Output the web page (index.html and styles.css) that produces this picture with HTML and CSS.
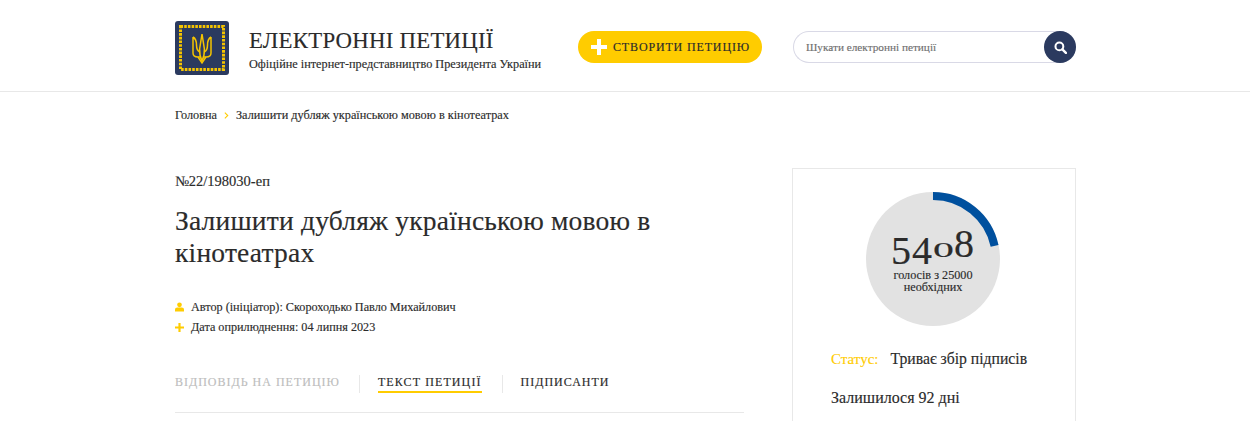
FILE: index.html
```html
<!DOCTYPE html>
<html lang="uk">
<head>
<meta charset="utf-8">
<title>Електронні петиції</title>
<link rel="stylesheet" href="styles.css">
</head>
<body>
<header class="site-header">
  <div class="header-inner">
    <a class="logo" href="#">
      <svg class="logo-mark" viewBox="0 0 54 54" width="54" height="54" aria-hidden="true">
        <rect width="54" height="54" rx="3" fill="#2b3a5f"/>
        <rect x="5.500" y="5.500" width="43" height="43" fill="none" stroke="#f5c400" stroke-width="3" stroke-dasharray="2.600 1.100"/>
        <g fill="none" stroke="#f5c400" stroke-width="1.500">
          <path d="M27 13 L24.600 28 Q24.400 35 27 40 Q29.600 35 29.400 28 Z"/>
          <path d="M18 16 V32 Q18 36 23 36 L25 36 M18 16 Q21.500 18 21.500 24 Q21.500 29 24.500 31"/>
          <path d="M36 16 V32 Q36 36 31 36 L29 36 M36 16 Q32.500 18 32.500 24 Q32.500 29 29.500 31"/>
          <path d="M23 36 L27 42 L31 36"/>
        </g>
      </svg>
      <span class="logo-text">
        <span class="logo-title">ЕЛЕКТРОННІ ПЕТИЦІЇ</span>
        <span class="logo-sub">Офіційне інтернет-представництво Президента України</span>
      </span>
    </a>
    <a class="create-btn" href="#">
      <svg viewBox="0 0 16 16" width="16" height="16" aria-hidden="true"><path d="M6 0h4v6h6v4h-6v6H6v-6H0V6h6z" fill="#fff"/></svg>
      <span>СТВОРИТИ ПЕТИЦІЮ</span>
    </a>
    <form class="search">
      <span class="search-text">Шукати електронні петиції</span>
      <span class="search-btn">
        <svg viewBox="0 0 14 14" width="13" height="13" aria-hidden="true"><circle cx="5.800" cy="5.800" r="4.200" fill="none" stroke="#fff" stroke-width="2.200"/><path d="M9 9l3.800 3.800" stroke="#fff" stroke-width="2.600" stroke-linecap="round"/></svg>
      </span>
    </form>
  </div>
</header>

<main class="page">
  <nav class="crumbs">
    <a href="#">Головна</a>
    <svg class="crumb-sep" viewBox="0 0 6 8" width="5" height="7" aria-hidden="true"><path d="M1 .5 4.500 4 1 7.500" fill="none" stroke="#ffcc00" stroke-width="1.300"/></svg>
    <span>Залишити дубляж українською мовою в кінотеатрах</span>
  </nav>

  <div class="columns">
    <article class="petition">
      <div class="number">№22/198030-еп</div>
      <h1>Залишити дубляж українською мовою в кінотеатрах</h1>
      <ul class="meta">
        <li>
          <svg viewBox="0 0 10 10" width="9" height="10" aria-hidden="true"><circle cx="5" cy="2.600" r="2.600" fill="#ffcc00"/><path d="M0 10V7.500Q0 5.500 2.500 5.500h5Q10 5.500 10 7.500V10z" fill="#ffcc00"/></svg>
          Автор (ініціатор): Скороходько Павло Михайлович
        </li>
        <li>
          <svg viewBox="0 0 10 10" width="9" height="9" aria-hidden="true"><path d="M3.800 0h2.400v3.800H10v2.400H6.200V10H3.800V6.200H0V3.800h3.800z" fill="#ffcc00"/></svg>
          Дата оприлюднення: 04 липня 2023
        </li>
      </ul>
      <div class="tabs">
        <a class="tab tab-muted" href="#">ВІДПОВІДЬ НА ПЕТИЦІЮ</a>
        <a class="tab tab-active" href="#">ТЕКСТ ПЕТИЦІЇ</a>
        <a class="tab" href="#">ПІДПИСАНТИ</a>
      </div>
    </article>

    <aside class="card">
      <div class="progress">
        <svg class="progress-ring" viewBox="0 0 134 134" width="134" height="134" aria-hidden="true">
          <circle cx="67" cy="67" r="67" fill="#e2e2e2"/>
          <path d="M67 4A63 63 0 0 1 128.600 53.900" fill="none" stroke="#00509e" stroke-width="8"/>
        </svg>
        <div class="progress-text">
          <div class="votes"><span class="digit-low">5</span><span class="digit-low">4</span><span class="digit-zero">0</span><span>8</span></div>
          <div class="votes-note">голосів з 25000<br>необхідних</div>
        </div>
      </div>
      <p class="status"><span class="status-label">Статус:</span>Триває збір підписів</p>
      <p class="left">Залишилося 92 дні</p>
    </aside>
  </div>
</main>
</body>
</html>
```

FILE: styles.css
```css
* { box-sizing: border-box; }
html, body { margin: 0; height: 421px; overflow: hidden; }
body {
  background: #fff;
  color: #2b2b2b;
  font-family: "Liberation Serif", "DejaVu Serif", serif;
  -webkit-text-stroke: .15px;
}
a { color: inherit; text-decoration: none; }

.site-header {
  height: 92px;
  border-bottom: 1px solid #e8e8e8;
}
.header-inner {
  display: flex;
  align-items: flex-start;
  margin-left: 175px;
  width: 901px;
  padding-top: 21px;
}
.logo { display: flex; width: 403px; }
.logo-mark { flex: none; }
.logo-text { display: flex; flex-direction: column; margin-left: 20px; padding-top: 6px; }
.logo-title { font-size: 22.800px; line-height: 28px; letter-spacing: .25px; }
.logo-sub { font-size: 12.250px; line-height: 16px; margin-top: 1px; }

.create-btn {
  display: flex;
  align-items: center;
  width: 184px;
  height: 32px;
  margin-top: 10px;
  padding-left: 13px;
  border-radius: 16px;
  background: #ffcc00;
  font-size: 12px;
  letter-spacing: .85px;
}
.create-btn span { margin-left: 6px; }

.search {
  display: flex;
  align-items: center;
  justify-content: space-between;
  width: 283px;
  height: 32px;
  margin: 10px 0 0 31px;
  padding-left: 12px;
  border: 1px solid #d9d9e6;
  border-right: 0;
  border-radius: 16px;
  font-size: 11.250px;
  color: #6f6f6f;
}
.search-btn {
  display: flex;
  align-items: center;
  justify-content: center;
  width: 32px;
  height: 32px;
  margin: -1px 0;
  border-radius: 50%;
  background: #2b3a5f;
}

.page { margin-left: 175px; width: 901px; }
.crumbs {
  display: flex;
  align-items: center;
  height: 16px;
  margin-top: 15px;
  font-size: 12.250px;
}
.crumb-sep { margin: 0 7px 0 7px; }

.columns { display: flex; align-items: flex-start; margin-top: 45px; }
.petition { width: 569px; flex: none; padding-top: 4px; }
.number { font-size: 14.500px; line-height: 18px; }
h1 {
  margin: 15px 0 0;
  font-size: 27.500px;
  font-weight: 400;
  line-height: 32px;
  letter-spacing: .2px;
}
.meta { list-style: none; margin: 28px 0 0; padding: 0; font-size: 12.200px; }
.meta li { display: flex; align-items: center; height: 20px; }
.meta svg { margin-right: 7px; flex: none; }

.tabs { display: flex; margin-top: 38px; padding-bottom: 19px; border-bottom: 1px solid #e8e8e8; }
.tab {
  position: relative;
  height: 18px;
  padding-bottom: 1px;
  font-size: 12px;
  line-height: 15px;
  letter-spacing: 1px;
  margin-right: 38px;
}
.tab + .tab::before {
  content: "";
  position: absolute;
  left: -19px;
  top: 0;
  width: 1px;
  height: 18px;
  background: #e8e8e8;
}
.tab-muted { color: #bdbdbd; }
.tab-active { border-bottom: 2px solid #ffcc00; letter-spacing: 1.100px; margin-right: 39px; }

.card {
  width: 284px;
  margin-left: 48px;
  height: 300px;
  padding: 23px 40px 0 38px;
  border: 1px solid #e8e8e8;
}
.progress { width: 134px; height: 134px; margin: 0 auto; position: relative; }
.progress-ring { display: block; }
.progress-text {
  position: absolute;
  left: 0;
  right: 0;
  top: 29px;
  text-align: center;
}
.votes {
  display: flex;
  justify-content: center;
  align-items: baseline;
  height: 46px;
  padding-top: 8px;
  font-size: 40px;
  line-height: 30px;
  letter-spacing: 1px;
}
.digit-low { display: inline-block; transform: translateY(7px); }
.digit-zero {
  display: inline-block;
  width: 21px;
  font-size: 22px;
  letter-spacing: 0;
  text-align: center;
  transform: scaleX(1.900);
}
.votes-note { font-size: 12.200px; line-height: 12px; margin-top: 2px; }
.status, .left { margin: 0; font-size: 15.700px; line-height: 20px; }
.status { margin-top: 23px; }
.status-label { color: #ffcc00; margin-right: 12px; font-size: 15px; }
.left { margin-top: 19px; font-size: 16px; white-space: nowrap; }
```
